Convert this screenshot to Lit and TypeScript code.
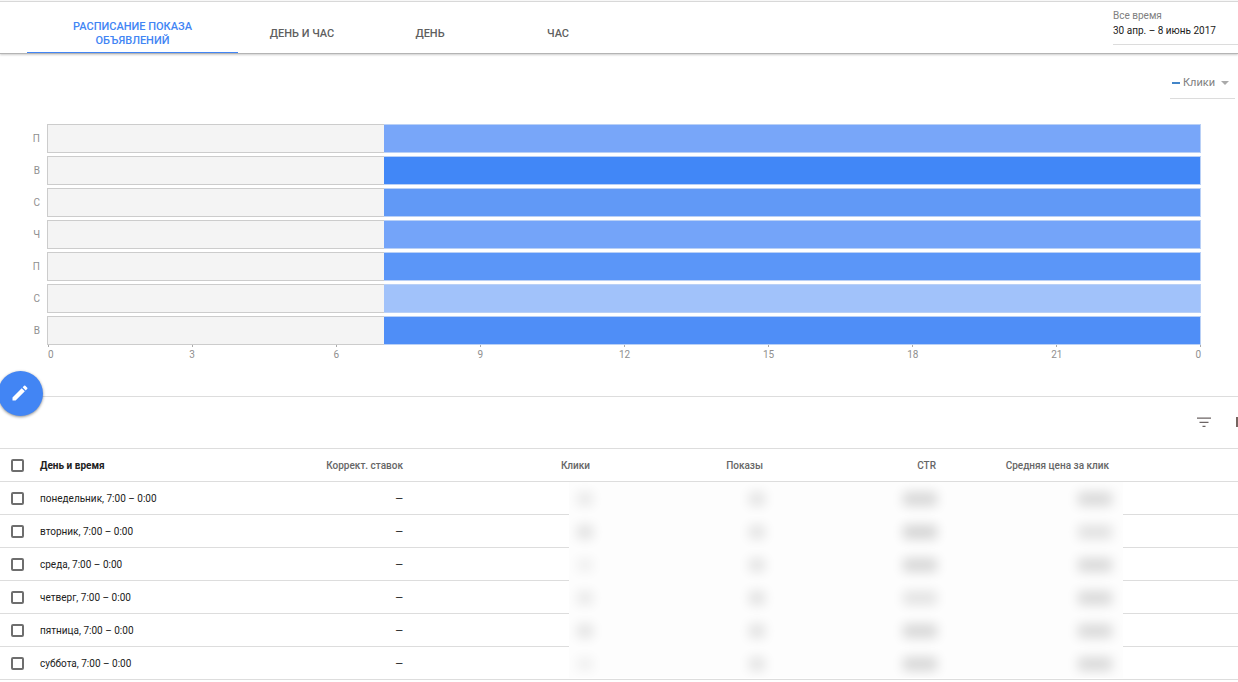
import { LitElement, html, css, svg } from "lit";
import { customElement } from "lit/decorators.js";
import { classMap } from "lit/directives/class-map.js";
import { styleMap } from "lit/directives/style-map.js";

const TABS = ["Расписание показа объявлений", "День и час", "День", "Час"];

const BARS = [
  { day: "П", color: "#78a6f9" },
  { day: "В", color: "#4187f7" },
  { day: "С", color: "#6199f6" },
  { day: "Ч", color: "#74a4f9" },
  { day: "П", color: "#5b96f8" },
  { day: "С", color: "#a1c2fa" },
  { day: "В", color: "#4f8ef7" },
];

const HOURS = ["0", "3", "6", "9", "12", "15", "18", "21", "0"];

const COLUMNS = ["Коррект. ставок", "Клики", "Показы", "CTR", "Средняя цена за клик"];

const ROWS = [
  "понедельник, 7:00 – 0:00",
  "вторник, 7:00 – 0:00",
  "среда, 7:00 – 0:00",
  "четверг, 7:00 – 0:00",
  "пятница, 7:00 – 0:00",
  "суббота, 7:00 – 0:00",
];

/* Strength of the hidden figures: clicks, impressions, CTR, average price. */
const HIDDEN = [
  [0.08, 0.1, 0.15, 0.14],
  [0.11, 0.1, 0.16, 0.11],
  [0.05, 0.1, 0.15, 0.14],
  [0.08, 0.11, 0.1, 0.14],
  [0.1, 0.11, 0.15, 0.14],
  [0.05, 0.1, 0.15, 0.14],
];

@customElement("week-chart")
class WeekChart extends LitElement {
  static styles = css`
    :host {
      display: block;
      padding: 25px 37px 0 28px;
      color: #8f8f8f;
      font-size: 10px;
      line-height: 12px;
    }
    .row {
      display: flex;
      align-items: center;
      height: 29px;
      margin-bottom: 3px;
    }
    .day {
      width: 12px;
      margin-right: 7px;
      text-align: right;
    }
    .track {
      display: flex;
      flex: 1;
      height: 29px;
    }
    .off {
      box-sizing: border-box;
      flex: 7;
      border: 1px solid #cccccc;
      border-right: 0;
      background: #f4f4f4;
    }
    .on {
      box-sizing: border-box;
      flex: 17;
      border: 1px solid #b9d0f6;
      border-left: 0;
      background-clip: padding-box;
    }
    .axis {
      display: flex;
      justify-content: space-between;
      margin: -3px 0 0 20px;
    }
    .hour {
      display: flex;
      flex-direction: column;
      align-items: center;
      width: 0;
    }
    .hour::before {
      content: "";
      width: 1px;
      height: 2px;
      margin-bottom: 2px;
      background: #aaaaaa;
    }
    .hour:first-child {
      align-items: flex-start;
    }
    .hour:last-child {
      align-items: flex-end;
    }
  `;

  render() {
    return html`
      ${BARS.map(
        (b) => html`<div class="row">
          <span class="day">${b.day}</span>
          <div class="track">
            <div class="off"></div>
            <div class="on" style=${styleMap({ backgroundColor: b.color })}></div>
          </div>
        </div>`
      )}
      <div class="axis">${HOURS.map((h) => html`<span class="hour">${h}</span>`)}</div>
    `;
  }
}

@customElement("schedule-table")
class ScheduleTable extends LitElement {
  static styles = css`
    :host {
      display: block;
      position: relative;
    }
    table {
      width: 100%;
      table-layout: fixed;
      border-collapse: collapse;
      font-size: 10px;
      line-height: 12px;
      color: #212121;
    }
    tr {
      height: 33px;
      border-top: 1px solid #dddddd;
    }
    tbody tr:last-child {
      border-bottom: 1px solid #dddddd;
    }
    th,
    td {
      padding: 2px 0 0;
      text-align: right;
      white-space: nowrap;
      font-weight: 400;
    }
    th {
      font-weight: 500;
      color: #666666;
    }
    .name {
      text-align: left;
    }
    th.name {
      font-weight: 700;
      color: #212121;
    }
    .check {
      width: 40px;
      padding: 0;
      text-align: left;
    }
    .c-name { width: 190px; }
    .c-adj { width: 173px; }
    .c-click { width: 187px; }
    .c-num { width: 173px; }
    input {
      appearance: none;
      display: block;
      box-sizing: border-box;
      width: 13px;
      height: 13px;
      margin: 0 0 0 11px;
      border: 2px solid #6e6e6e;
      border-radius: 2px;
      background: #ffffff;
    }
    input:checked {
      background: #4285f4;
    }
    .mask {
      position: absolute;
      top: 34px;
      left: 569px;
      width: 554px;
      height: 196px;
      overflow: hidden;
      background: #fdfdfd;
    }
    .line {
      display: grid;
      grid-template-columns: 24px 172px 172px 175px;
      height: 33px;
      align-items: center;
      justify-items: end;
    }
    .smudge {
      width: 16px;
      height: 14px;
      background: #000000;
      filter: blur(6px);
    }
    .wide {
      width: 34px;
    }
  `;

  render() {
    return html`
      <table>
        <colgroup>
          <col class="check" />
          <col class="c-name" />
          <col class="c-adj" />
          <col class="c-click" />
          <col class="c-num" />
          <col class="c-num" />
          <col class="c-num" />
          <col />
        </colgroup>
        <thead>
          <tr>
            <th class="check"><input type="checkbox" aria-label="Выбрать все" /></th>
            <th class="name">День и время</th>
            ${COLUMNS.map((c) => html`<th>${c}</th>`)}
            <th></th>
          </tr>
        </thead>
        <tbody>
          ${ROWS.map(
            (r, i) => html`<tr>
              <td class="check"><input type="checkbox" id="row-${i}" /></td>
              <td class="name"><label for="row-${i}">${r}</label></td>
              <td>—</td>
              <td></td>
              <td></td>
              <td></td>
              <td></td>
              <td></td>
            </tr>`
          )}
        </tbody>
      </table>
      <div class="mask" aria-hidden="true">
        ${HIDDEN.map(
          (line) => html`<div class="line">
            ${line.map(
              (o, i) => html`<span
                class=${classMap({ smudge: true, wide: i > 1 })}
                style=${styleMap({ opacity: String(o) })}
              ></span>`
            )}
          </div>`
        )}
      </div>
    `;
  }
}

@customElement("app-root")
class AppRoot extends LitElement {
  static styles = css`
    :host {
      display: block;
      overflow: hidden;
      background: #ffffff;
      font-family: Roboto, "Noto Sans", sans-serif;
    }
    button,
    select {
      font-family: inherit;
      background: none;
      border: 0;
      border-radius: 0;
      margin: 0;
      padding: 0;
    }
    .top {
      display: flex;
      justify-content: space-between;
      box-sizing: border-box;
      height: 54px;
      margin-bottom: 14px;
      padding-top: 1px;
      border-bottom: 1px solid #b4b4b4;
      box-shadow: inset 0 1px #f7f7f7, inset 0 2px #d8d8d8, 0 1px 2px rgba(0, 0, 0, 0.2);
    }
    .tabs {
      display: flex;
      padding-left: 27px;
    }
    .tab {
      box-sizing: border-box;
      width: 128px;
      padding: 15px 0 0;
      border-bottom: 1px solid transparent;
      color: #5f5f5f;
      font-size: 11px;
      font-weight: 500;
      line-height: 14px;
      text-transform: uppercase;
    }
    .active {
      width: 211px;
      padding-inline: 40px;
      border-bottom-color: #4285f4;
      color: #4285f4;
    }
    .date {
      align-self: flex-start;
      box-sizing: border-box;
      width: 125px;
      height: 44px;
      padding-top: 1px;
      border-bottom: 1px solid #dcdcdc;
      font-size: 10px;
      line-height: 15px;
      text-align: left;
      color: #212121;
    }
    .range {
      display: block;
      color: #808080;
    }
    .metric {
      display: flex;
      align-items: center;
      width: 65px;
      height: 30px;
      margin: 0 3px 0 auto;
      border-bottom: 1px solid #dcdcdc;
    }
    .dash {
      width: 8px;
      height: 2px;
      margin: 0 3px 0 2px;
      background: #4285c8;
    }
    .metric select {
      appearance: none;
      flex: 1;
      color: #808080;
      font-size: 11px;
      line-height: 14px;
    }
    .arrow {
      margin-right: 6px;
      border: 4px solid transparent;
      border-top-color: #aaaaaa;
      border-bottom: 0;
    }
    .tools {
      position: relative;
      display: flex;
      justify-content: flex-end;
      align-items: center;
      box-sizing: border-box;
      height: 52px;
      margin-top: 35px;
      padding-bottom: 2px;
      border-top: 1px solid #dddddd;
    }
    .fab {
      position: absolute;
      top: -26px;
      left: -2px;
      display: grid;
      place-items: center;
      width: 45px;
      height: 45px;
      padding: 0 1px 2px 0;
      border-radius: 50%;
      background: #4285f4;
      box-shadow: 0 1px 3px rgba(0, 0, 0, 0.45);
    }
    .icon {
      display: block;
      width: 20px;
      height: 20px;
    }
    .filter {
      margin-right: 22px;
    }
    .more {
      width: 2px;
      height: 10px;
      background: #756560;
    }
    svg {
      display: block;
      width: 20px;
      height: 20px;
    }
  `;

  render() {
    return html`
      <header class="top">
        <nav class="tabs" role="tablist">
          ${TABS.map(
            (t, i) => html`<button
              role="tab"
              aria-selected=${i === 0}
              class=${classMap({ tab: true, active: i === 0 })}
            >
              ${t}
            </button>`
          )}
        </nav>
        <button class="date"><span class="range">Все время</span>30 апр. – 8 июнь 2017</button>
      </header>
      <div class="metric">
        <span class="dash"></span>
        <select aria-label="Показатель">
          <option>Клики</option>
        </select>
        <span class="arrow"></span>
      </div>
      <week-chart></week-chart>
      <div class="tools">
        <button class="fab" aria-label="Изменить">
          <svg viewBox="0 0 24 24" fill="#ffffff">
            ${svg`<path d="M3 17.25V21h3.75L17.81 9.94l-3.75-3.75L3 17.25zM20.71 7.04a1 1 0 0 0 0-1.41l-2.34-2.34a1 1 0 0 0-1.41 0l-1.83 1.83 3.75 3.75 1.83-1.83z" />`}
          </svg>
        </button>
        <button class="icon filter" aria-label="Фильтр">
          <svg viewBox="0 0 20 20" fill="#6c6464">
            ${svg`<path d="M3 5.500h14v1.200H3zM5.500 9.700h9v1.200h-9zM8.500 13.700h3v1.200h-3z" />`}
          </svg>
        </button>
        <button class="more" aria-label="Столбцы"></button>
      </div>
      <schedule-table></schedule-table>
    `;
  }
}
